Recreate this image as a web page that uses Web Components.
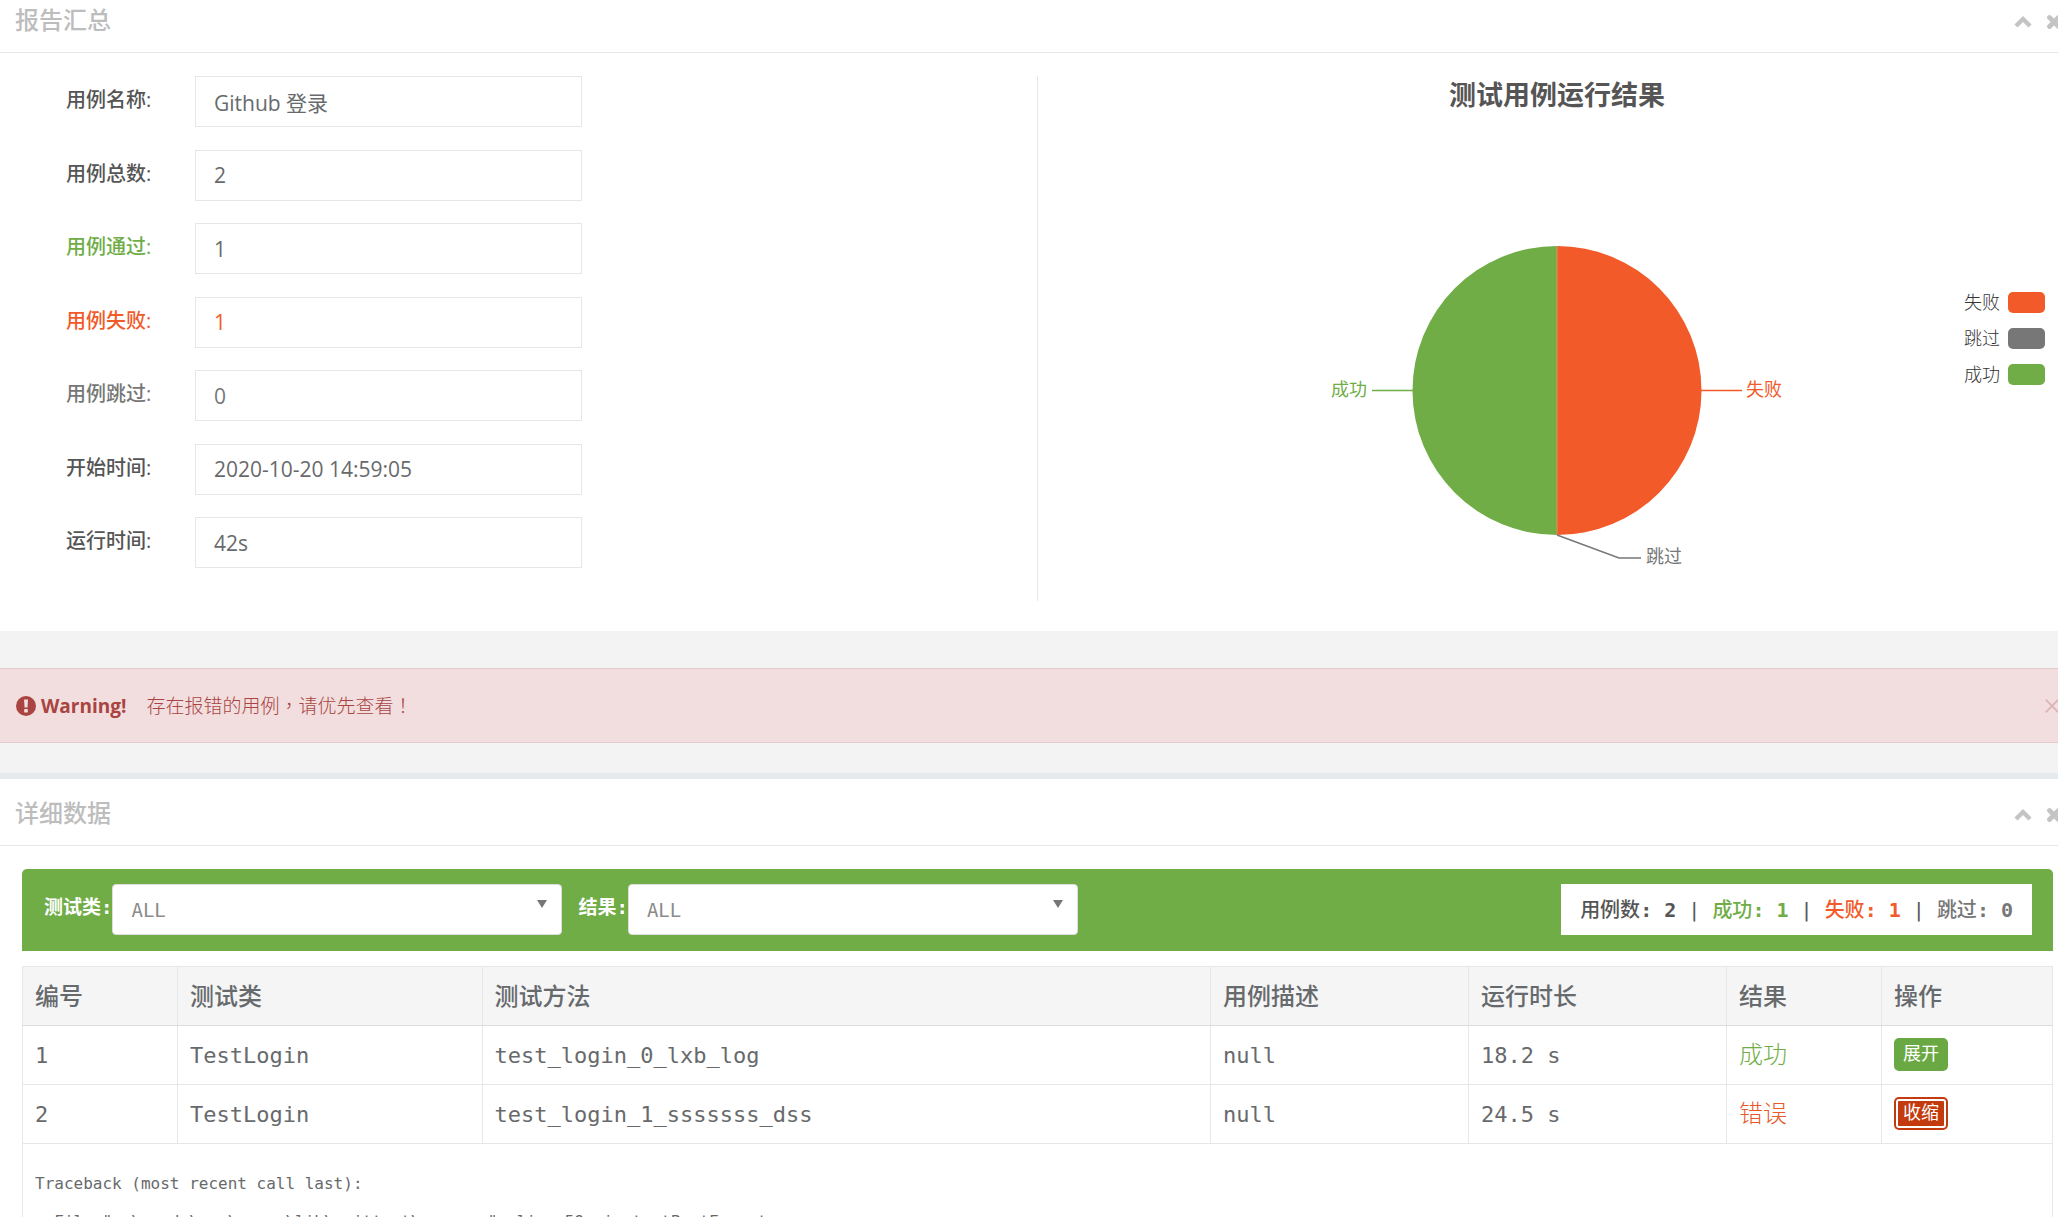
<!DOCTYPE html>
<html lang="zh-CN">
<head>
<meta charset="utf-8">
<title>测试报告</title>
<style>
  html, body { margin: 0; height: 100%; overflow: hidden; background: #f3f3f3; }
  body {
    font-family: "Open Sans", "Noto Sans CJK SC", sans-serif;
    font-size: 20px; line-height: 28px; color: #676a6c;
    --green: #70ad47; --red: #f25a29; --line: #e7e7e7;
    --mono: "DejaVu Sans Mono", "Noto Sans CJK SC", monospace;
  }
</style>
</head>
<body>
<report-page></report-page>

<script>
function define(name, markup, setup) {
  const tpl = document.createElement('template');
  tpl.innerHTML = markup;
  customElements.define(name, class extends HTMLElement {
    connectedCallback() {
      if (this.shadowRoot) return;
      const root = this.attachShadow({ mode: 'open' });
      root.append(tpl.content.cloneNode(true));
      if (setup) setup(root, this);
    }
  });
}

/* White panel: title, collapse and close tools, content */
define('report-panel', `
<style>
  :host { display: block; background: #fff; border-top: 6px solid #e7eaec; }
  header { display: flex; align-items: center; justify-content: space-between; height: 66px; padding: 0 14px 0 15px; border-bottom: 1px solid var(--line); }
  h2 { margin: 0; padding-top: 2px; font-size: 24px; font-weight: 500; color: #bdbdbd; }
  .tools { display: flex; gap: 14px; padding-top: 6px; }
  button { display: flex; padding: 0; border: 0; background: none; color: #c4c4c4; }
  svg { display: block; }
</style>
<header>
  <h2></h2>
  <div class="tools">
    <button type="button" aria-label="收起"><svg width="18" height="16" viewBox="0 0 18 16"><path d="M2 12 9 5 16 12" fill="none" stroke="currentColor" stroke-width="4.4"/></svg></button>
    <button type="button" aria-label="关闭"><svg width="16" height="16" viewBox="0 0 16 16"><path d="M3.5 3.5 12.5 12.5M12.5 3.5 3.5 12.5" fill="none" stroke="currentColor" stroke-width="4.8" stroke-linecap="round"/></svg></button>
  </div>
</header>
<slot></slot>`, (root, el) => { root.querySelector('h2').textContent = el.getAttribute('heading'); });

/* Label with a read-only value */
define('report-field', `
<style>
  :host { display: flex; color: #555; --value: #676a6c; }
  :host([tone=pass]) { color: var(--green); }
  :host([tone=fail]) { color: var(--red); --value: var(--red); }
  :host([tone=skip]) { color: #777; --value: #777; }
  label { width: 129px; padding-top: 10px; font-weight: 500; }
  input { box-sizing: border-box; width: 387px; height: 51px; padding: 0 18px; border: 1px solid #e5e6e7; background: #fff; color: var(--value); font: 21px "Open Sans", "Noto Sans CJK SC", sans-serif; }
</style>
<label for="value"></label><input id="value" readonly>`, (root, el) => {
  root.querySelector('label').textContent = el.getAttribute('label');
  root.querySelector('input').value = el.getAttribute('value');
});

/* Pie chart with outside labels and a legend */
define('result-chart', `
<style>
  :host { display: grid; grid-template-rows: auto 1fr; }
  h3 { margin: 5px 0 0; text-align: center; font-size: 27px; line-height: 28px; font-weight: 700; color: #555; }
  svg { grid-area: 2 / 1; justify-self: center; margin-top: 41px; }
  text { font-size: 18px; }
  ul { grid-area: 2 / 1; justify-self: end; align-self: start; display: grid; gap: 15px; list-style: none; margin: 183px 31px 0 0; padding: 0; color: #333; font-size: 18px; line-height: 21px; font-weight: 300; }
  li { display: flex; align-items: center; gap: 8px; }
  i { width: 37px; height: 21px; border-radius: 5px; background: var(--c); }
</style>
<h3>测试用例运行结果</h3>
<svg width="480" height="420" viewBox="0 0 480 420" role="img" aria-label="测试用例运行结果">
  <path d="M240 96a144.500 144.500 0 0 1 0 289z" fill="#f25a29"/>
  <path d="M240 385a144.500 144.500 0 0 1 0-289z" fill="#70ad47"/>
  <path d="M240 96V385" stroke="#d99a55"/>
  <g fill="none" stroke-width="1.500">
    <path d="M55 240.500H96" stroke="#70ad47"/>
    <path d="M384 240.500H425" stroke="#f25a29"/>
    <path d="M240 385 302 408H324" stroke="#777"/>
  </g>
  <text x="14" y="246" fill="#70ad47">成功</text>
  <text x="429" y="246" fill="#f25a29">失败</text>
  <text x="329" y="413" fill="#777">跳过</text>
</svg>
<ul>
  <li>失败<i style="--c:#f25a29"></i></li>
  <li>跳过<i style="--c:#777"></i></li>
  <li>成功<i style="--c:#70ad47"></i></li>
</ul>`);

define('report-summary', `
<style>
  :host { display: grid; grid-template-columns: 1fr 1fr; padding: 23px 0 30px; }
  .fields { display: flex; flex-direction: column; justify-content: space-between; min-height: 492px; margin-bottom: 33px; padding-left: 66px; }
  .left { border-right: 1px solid var(--line); }
</style>
<div class="left"><div class="fields">
  <report-field label="用例名称:" value="Github 登录"></report-field>
  <report-field label="用例总数:" value="2"></report-field>
  <report-field label="用例通过:" value="1" tone="pass"></report-field>
  <report-field label="用例失败:" value="1" tone="fail"></report-field>
  <report-field label="用例跳过:" value="0" tone="skip"></report-field>
  <report-field label="开始时间:" value="2020-10-20 14:59:05"></report-field>
  <report-field label="运行时间:" value="42s"></report-field>
</div></div>
<result-chart></result-chart>`);

define('warning-alert', `
<style>
  :host { display: flex; align-items: center; height: 73px; margin: 37px 0 30px; padding: 0 17px 0 16px; border: solid #e4c9cc; border-width: 1px 0; background: #f2dede; color: #a94442; font-size: 19px; }
  strong { margin: 0 20px 0 5px; font-weight: 700; }
  p { flex: 1; margin: 0; font-family: "Open Sans", "Noto Sans CJK TC", sans-serif; font-weight: 300; }
  button { padding: 0; border: 0; background: none; color: #ddb4b6; }
  svg { display: block; }
</style>
<svg width="20" height="20" viewBox="0 0 20 20"><circle cx="10" cy="10" r="10" fill="#a94442"/><path d="M8 3.500h4l-.5 8h-3z" fill="#f2dede"/><rect x="8.200" y="13" width="3.600" height="3.400" rx=".6" fill="#f2dede"/></svg>
<strong>Warning!</strong>
<p lang="zh-TW">存在报错的用例，请优先查看！</p>
<button type="button" aria-label="关闭"><svg width="14" height="14" viewBox="0 0 14 14"><path d="M.7.7 13.300 13.300M13.300.7.7 13.300" stroke="currentColor" stroke-width="1.800"/></svg></button>`);

define('filter-select', `
<style>
  :host { display: flex; color: #fff; font-size: 19px; font-weight: 700; }
  label { padding-top: 9px; }
  .box { position: relative; }
  select { appearance: none; box-sizing: border-box; width: 450px; height: 51px; padding: 0 18px; border: 1px solid #ddd; border-radius: 4px; background: #fff; color: #8b8b8b; font: 19px var(--mono); }
  svg { position: absolute; right: 15px; top: 16px; pointer-events: none; }
</style>
<label for="s"></label>
<div class="box"><select id="s"><option>ALL</option></select><svg width="10" height="8" viewBox="0 0 10 8"><path d="M0 0H10L5 8z" fill="#777"/></svg></div>`,
(root, el) => { root.querySelector('label').textContent = el.getAttribute('label'); });

define('filter-bar', `
<style>
  :host { display: flex; align-items: flex-start; gap: 16px; padding: 15px 21px 16px 22px; border-radius: 5px 5px 0 0; background: var(--green); font-family: var(--mono); }
  .stats { margin-left: auto; box-sizing: border-box; height: 51px; padding: 0 19px; background: #fff; color: #555; font-size: 20px; line-height: 52px; font-weight: 500; white-space: pre; }
  .pass { color: var(--green); } .fail { color: var(--red); } .skip { color: #777; }
  b { font-weight: 700; }
</style>
<filter-select label="测试类:"></filter-select>
<filter-select label="结果:"></filter-select>
<div class="stats">用例数<b>: 2</b> | <span class="pass">成功<b>: 1</b></span> | <span class="fail">失败<b>: 1</b></span> | <span class="skip">跳过<b>: 0</b></span></div>`);

define('toggle-button', `
<style>
  :host { display: block; height: 33px; }
  button { display: block; width: 54px; height: 33px; padding: 0 0 4px; border: 0; border-radius: 5px; background: #69a843; color: #fff; font: 400 18px "Noto Sans CJK SC", sans-serif; line-height: 28px; }
  :host([open]) button { background: #c23a0e; outline: 2px solid #fff; outline-offset: -4px; }
</style>
<button type="button"><slot></slot></button>`);

define('case-table', `
<style>
  :host { display: block; margin-top: 15px; font-family: var(--mono); }
  table { width: 100%; table-layout: fixed; border-collapse: collapse; }
  th, td { box-sizing: border-box; height: 59px; padding: 1px 12px 0; border: 1px solid var(--line); text-align: left; font-weight: 400; font-size: 22px; line-height: 34px; }
  th { background: #f5f5f6; border-bottom-color: #ddd; font-size: 24px; font-weight: 500; }
  .ok, .err { padding-bottom: 2px; font-size: 24px; font-weight: 300; color: var(--green); }
  .err { color: #e8592b; }
  td.act { padding: 0 12px 2px; }
  td.trace { padding: 21px 12px; }
  pre { margin: 0; font-family: var(--mono); font-size: 16px; line-height: 38px; }
</style>
<table>
  <colgroup><col style="width:155px"><col style="width:15%"><col><col style="width:258px"><col style="width:258px"><col style="width:155px"><col style="width:171px"></colgroup>
  <thead><tr><th>编号</th><th>测试类</th><th>测试方法</th><th>用例描述</th><th>运行时长</th><th>结果</th><th>操作</th></tr></thead>
  <tbody>
    <tr><td>1</td><td>TestLogin</td><td>test_login_0_lxb_log</td><td>null</td><td>18.2 s</td><td class="ok">成功</td><td class="act"><toggle-button>展开</toggle-button></td></tr>
    <tr><td>2</td><td>TestLogin</td><td>test_login_1_sssssss_dss</td><td>null</td><td>24.5 s</td><td class="err">错误</td><td class="act"><toggle-button open>收缩</toggle-button></td></tr>
    <tr><td class="trace" colspan="7"><pre>Traceback (most recent call last):
  File "c:\\panda\\env\\pyenv\\lib\\unittest\\case.py", line 59, in testPartExecutor</pre></td></tr>
  </tbody>
</table>`);

define('report-page', `
<style>
  :host { display: block; width: calc(100% + 18px); margin-top: -20px; }
  .detail { padding: 23px 23px 40px 22px; }
</style>
<report-panel heading="报告汇总"><report-summary></report-summary></report-panel>
<warning-alert></warning-alert>
<report-panel heading="详细数据"><div class="detail"><filter-bar></filter-bar><case-table></case-table></div></report-panel>`);
</script>
</body>
</html>
